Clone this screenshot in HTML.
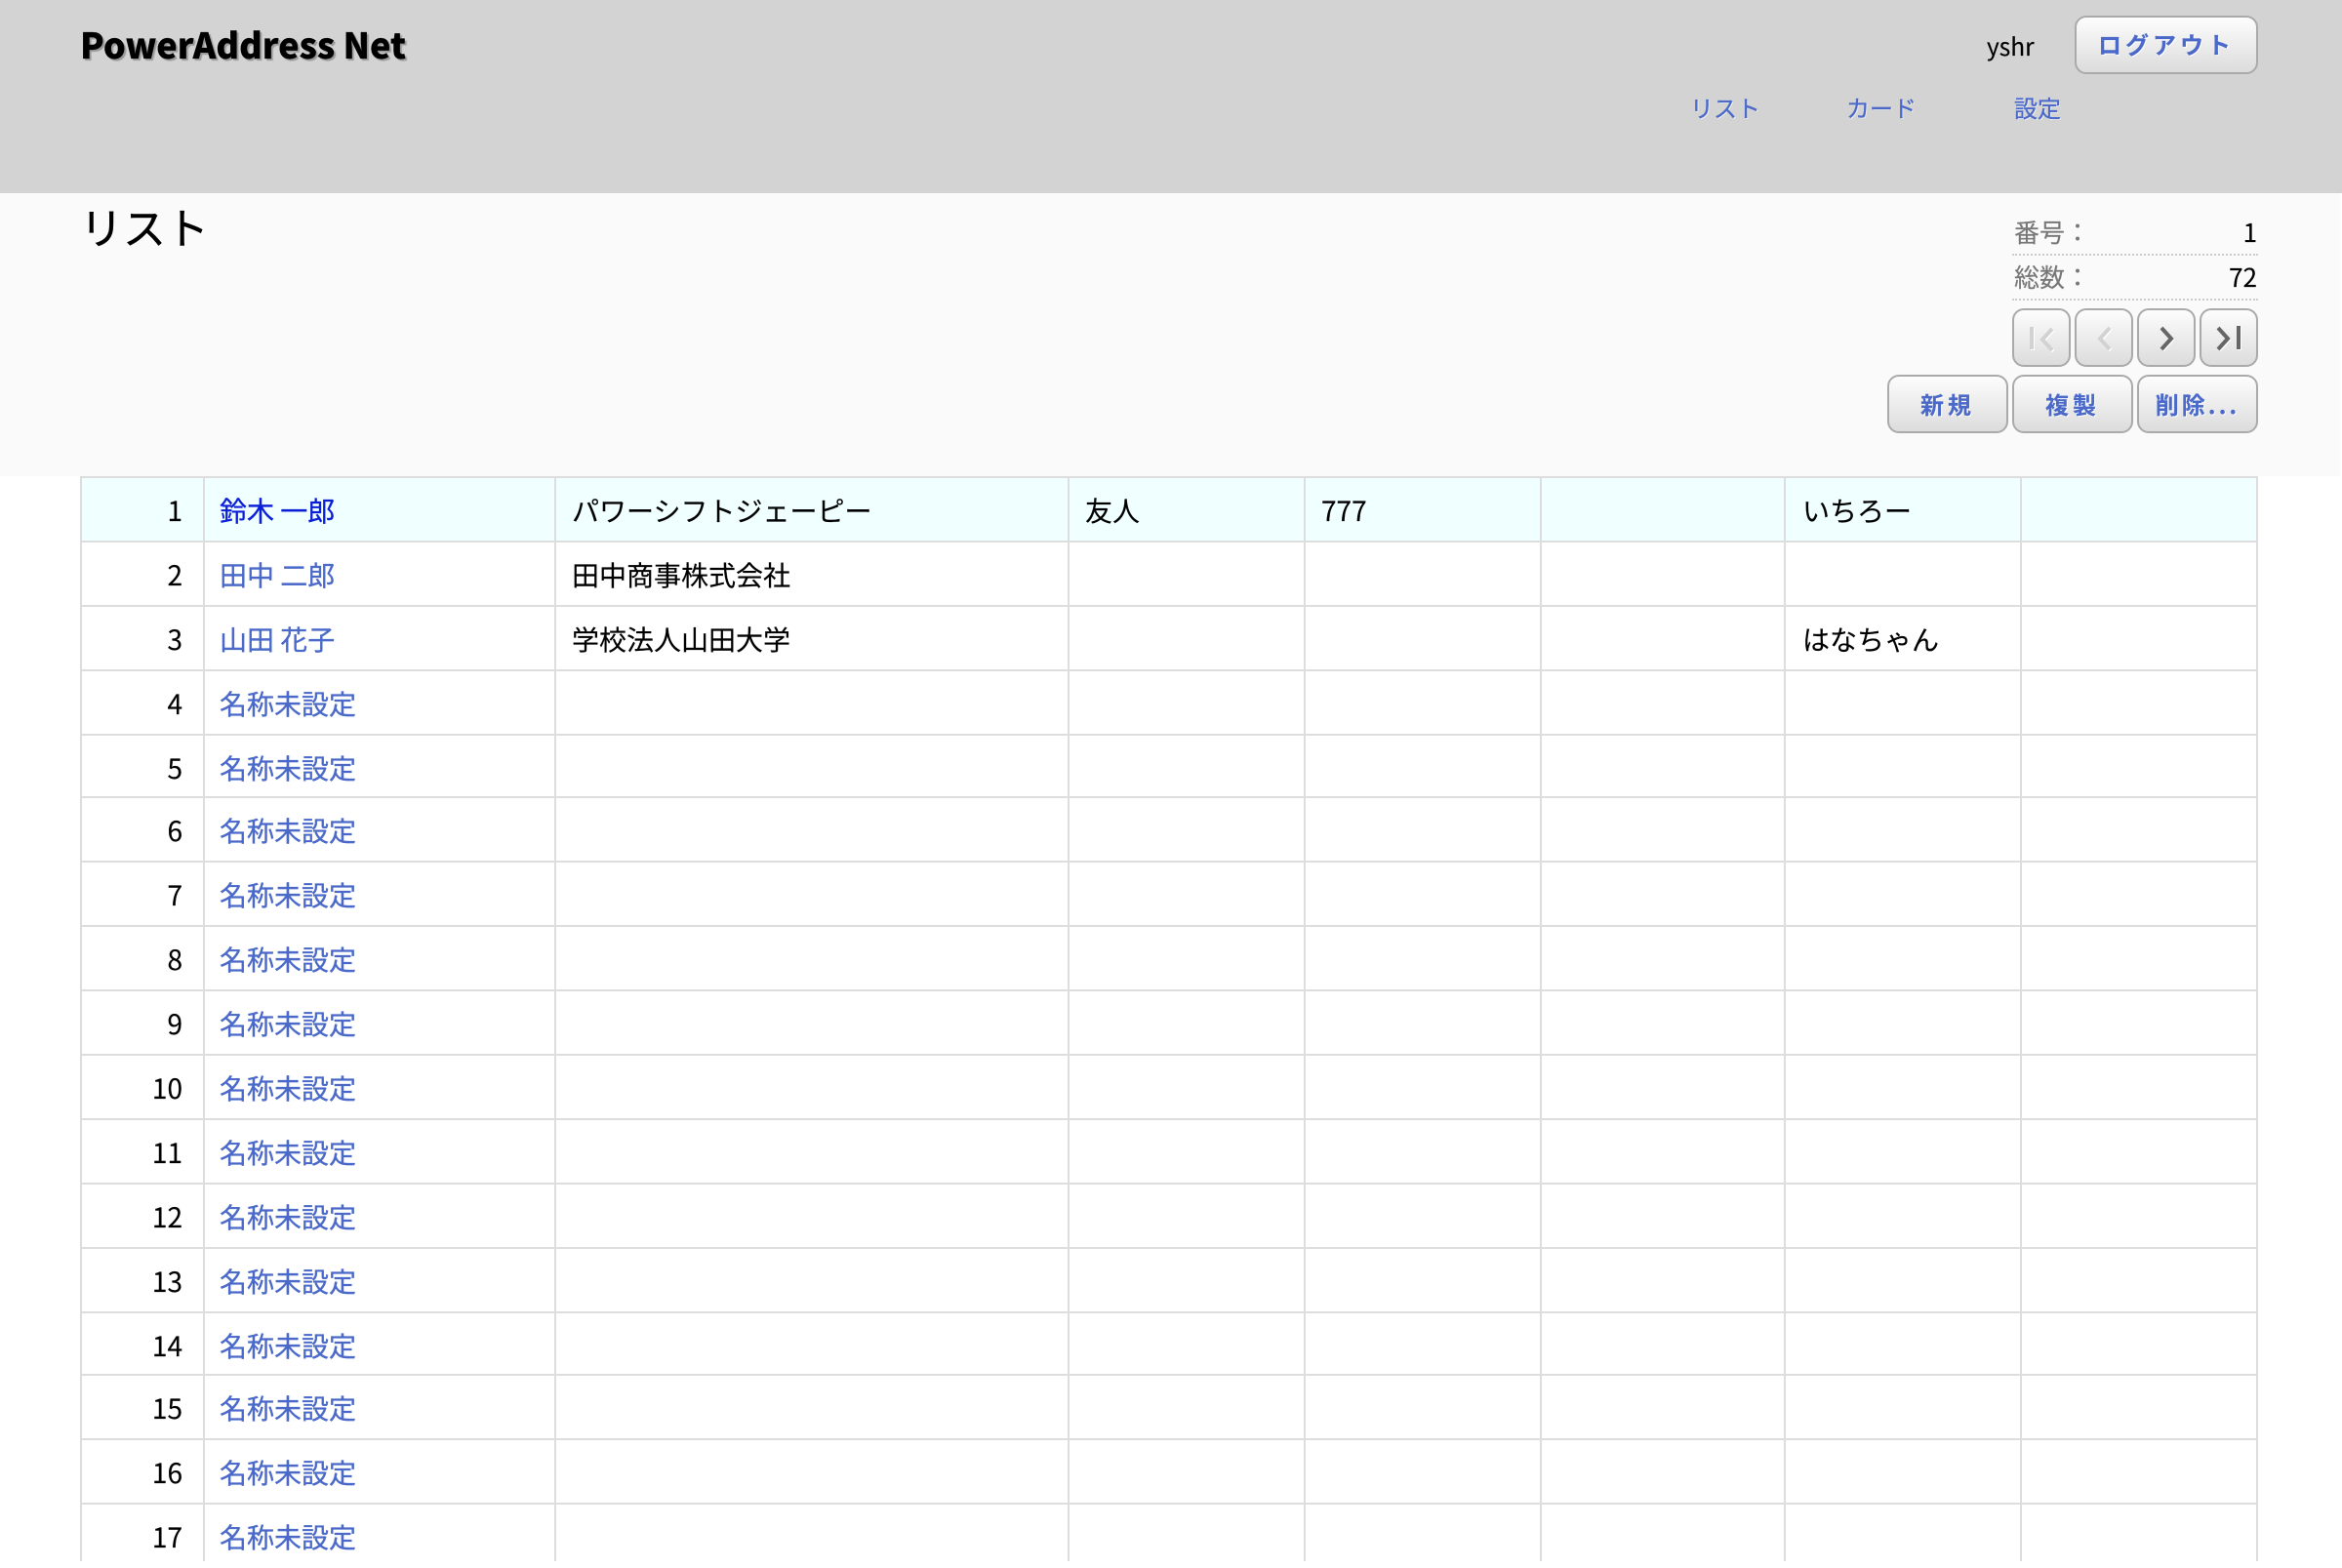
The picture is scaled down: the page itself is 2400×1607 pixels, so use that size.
<!DOCTYPE html>
<html lang="ja">
<head>
<meta charset="utf-8">
<title>PowerAddress Net</title>
<style>
html,body{margin:0;padding:0;background:#fff;}
body{position:relative;width:2400px;height:1600px;overflow:hidden;font-family:"Noto Sans CJK JP","Liberation Sans",sans-serif;font-size:28px;color:#000;-webkit-text-stroke:.15px currentColor;}
.abs,.hd,.sub,.btn,.r,.v,.t{position:absolute;}
.hd{left:0;top:0;width:2400px;height:198px;background:#d3d3d3;}
.sub{left:0;top:198px;width:2398px;height:290px;background:#fafafa;}
.t{white-space:nowrap;}
.lnk{color:#4a69c9;text-shadow:1px 1px 0 #eee;-webkit-text-stroke:.3px #4a69c9;}
.btn{box-sizing:border-box;border:2px solid #aaa;border-radius:12px;background:linear-gradient(#fdfdfd,#dcdcdc);color:#4a69c9;font-weight:700;font-size:24px;letter-spacing:4px;text-align:center;text-shadow:1px 1px 0 #fff;}
.btn svg{position:absolute;left:-2px;top:-2px;}
.r{left:82px;width:2232px;box-sizing:border-box;border-top:2px solid #ddd;}
.r span{position:absolute;top:1px;line-height:64px;white-space:nowrap;}
.r .n{right:2127px;width:100px;text-align:right;}
.r .a{left:143px;color:#4a69c9;-webkit-text-stroke:.3px #4a69c9;}
.v{top:488px;height:1112px;width:2px;background:#ddd;}
</style>
</head>
<body>
<div class="hd"></div>
<div class="sub"></div>

<div class="t" style="left:82px;top:19px;font-size:36px;line-height:52px;font-weight:900;text-shadow:2px 2px 1px #999;">PowerAddress Net</div>
<div class="t" style="left:2036px;top:28px;font-size:24.5px;line-height:40px;">yshr</div>
<div class="btn" style="left:2126px;top:16px;width:188px;height:60px;line-height:54px;">ログアウト</div>
<div class="t lnk" style="left:1732px;top:92px;font-size:24px;line-height:36px;">リスト</div>
<div class="t lnk" style="left:1892px;top:92px;font-size:24px;line-height:36px;">カード</div>
<div class="t lnk" style="left:2064px;top:92px;font-size:24px;line-height:36px;">設定</div>

<div class="t" style="left:82px;top:199px;font-size:44px;line-height:64px;-webkit-text-stroke:.4px #000;">リスト</div>

<div class="t" style="left:2064px;top:219px;font-size:26px;line-height:38px;color:#777;">番号：</div>
<div class="t" style="right:87px;top:219px;font-size:26px;line-height:38px;">1</div>
<div class="abs" style="left:2062px;top:260px;width:252px;border-top:2px dotted #ccc;"></div>
<div class="t" style="left:2064px;top:265px;font-size:26px;line-height:38px;color:#777;">総数：</div>
<div class="t" style="right:87px;top:265px;font-size:26px;line-height:38px;">72</div>
<div class="abs" style="left:2062px;top:306px;width:252px;border-top:2px dotted #ccc;"></div>

<div class="btn" style="left:2062px;top:316px;width:60px;height:60px;"><svg width="60" height="60" viewBox="0 0 60 60" fill="none" stroke-width="4"><g stroke="#fff" transform="translate(1 1)"><path d="M20 19V42M41 21L31 32L41 43"/></g><g stroke="#d2d2d2"><path d="M20 19V42M41 21L31 32L41 43"/></g></svg></div>
<div class="btn" style="left:2126px;top:316px;width:60px;height:60px;"><svg width="60" height="60" viewBox="0 0 60 60" fill="none" stroke-width="4"><g stroke="#fff" transform="translate(1 1)"><path d="M36 20L26 31L36 42"/></g><g stroke="#d2d2d2"><path d="M36 20L26 31L36 42"/></g></svg></div>
<div class="btn" style="left:2190px;top:316px;width:60px;height:60px;"><svg width="60" height="60" viewBox="0 0 60 60" fill="none" stroke-width="4"><g stroke="#fff" transform="translate(1 1)"><path d="M25 20L35 31L25 42"/></g><g stroke="#666"><path d="M25 20L35 31L25 42"/></g></svg></div>
<div class="btn" style="left:2254px;top:316px;width:60px;height:60px;"><svg width="60" height="60" viewBox="0 0 60 60" fill="none" stroke-width="4"><g stroke="#fff" transform="translate(1 1)"><path d="M19 20L29 31L19 42M40 18V42"/></g><g stroke="#666"><path d="M19 20L29 31L19 42M40 18V42"/></g></svg></div>

<div class="btn" style="left:1934px;top:384px;width:124px;height:60px;line-height:56px;">新規</div>
<div class="btn" style="left:2062px;top:384px;width:124px;height:60px;line-height:56px;">複製</div>
<div class="btn" style="left:2190px;top:384px;width:124px;height:60px;line-height:56px;letter-spacing:3px;">削除...</div>

<div class="r" style="top:488px;height:66px;background:#f0ffff;"><span class="n">1</span><span class="a" style="color:#0a1fd6;-webkit-text-stroke:.3px #0a1fd6;">鈴木 一郎</span><span style="left:504px;">パワーシフトジェーピー</span><span style="left:1030px;">友人</span><span style="left:1272px;">777</span><span style="left:1765px;">いちろー</span></div>
<div class="r" style="top:554px;height:66px;"><span class="n">2</span><span class="a">田中 二郎</span><span style="left:504px;">田中商事株式会社</span></div>
<div class="r" style="top:620px;height:66px;"><span class="n">3</span><span class="a">山田 花子</span><span style="left:504px;">学校法人山田大学</span><span style="left:1765px;">はなちゃん</span></div>
<div class="r" style="top:686px;height:66px;"><span class="n">4</span><span class="a">名称未設定</span></div>
<div class="r" style="top:752px;height:64px;"><span class="n">5</span><span class="a">名称未設定</span></div>
<div class="r" style="top:816px;height:66px;"><span class="n">6</span><span class="a">名称未設定</span></div>
<div class="r" style="top:882px;height:66px;"><span class="n">7</span><span class="a">名称未設定</span></div>
<div class="r" style="top:948px;height:66px;"><span class="n">8</span><span class="a">名称未設定</span></div>
<div class="r" style="top:1014px;height:66px;"><span class="n">9</span><span class="a">名称未設定</span></div>
<div class="r" style="top:1080px;height:66px;"><span class="n">10</span><span class="a">名称未設定</span></div>
<div class="r" style="top:1146px;height:66px;"><span class="n">11</span><span class="a">名称未設定</span></div>
<div class="r" style="top:1212px;height:66px;"><span class="n">12</span><span class="a">名称未設定</span></div>
<div class="r" style="top:1278px;height:66px;"><span class="n">13</span><span class="a">名称未設定</span></div>
<div class="r" style="top:1344px;height:64px;"><span class="n">14</span><span class="a">名称未設定</span></div>
<div class="r" style="top:1408px;height:66px;"><span class="n">15</span><span class="a">名称未設定</span></div>
<div class="r" style="top:1474px;height:66px;"><span class="n">16</span><span class="a">名称未設定</span></div>
<div class="r" style="top:1540px;height:60px;"><span class="n">17</span><span class="a">名称未設定</span></div>

<div class="v" style="left:82px;"></div>
<div class="v" style="left:208px;"></div>
<div class="v" style="left:568px;"></div>
<div class="v" style="left:1094px;"></div>
<div class="v" style="left:1336px;"></div>
<div class="v" style="left:1578px;"></div>
<div class="v" style="left:1828px;"></div>
<div class="v" style="left:2070px;"></div>
<div class="v" style="left:2312px;"></div>
</body>
</html>
